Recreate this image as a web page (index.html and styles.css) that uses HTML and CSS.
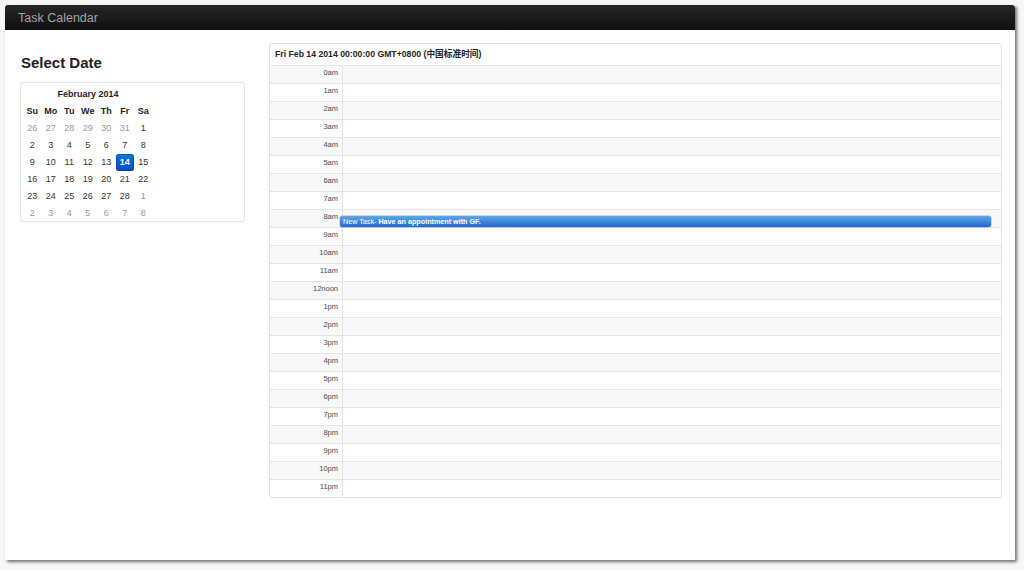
FILE: index.html
```html
<!DOCTYPE html>
<html>
<head>
<meta charset="utf-8">
<title>Task Calendar</title>
<link rel="stylesheet" href="styles.css">
</head>
<body>
<div class="window">
  <div class="navbar"><span class="brand">Task Calendar</span></div>
  <div class="content">
    <div class="sidebar">
      <h3 class="title">Select Date</h3>
      <div class="datepicker">
        <div class="dp-row dp-month">February 2014</div>
        <div class="dp-grid">
          <div class="dow">Su</div><div class="dow">Mo</div><div class="dow">Tu</div><div class="dow">We</div><div class="dow">Th</div><div class="dow">Fr</div><div class="dow">Sa</div>
          <div class="day old">26</div><div class="day old">27</div><div class="day old">28</div><div class="day old">29</div><div class="day old">30</div><div class="day old">31</div><div class="day">1</div>
          <div class="day">2</div><div class="day">3</div><div class="day">4</div><div class="day">5</div><div class="day">6</div><div class="day">7</div><div class="day">8</div>
          <div class="day">9</div><div class="day">10</div><div class="day">11</div><div class="day">12</div><div class="day">13</div><div class="day active">14</div><div class="day">15</div>
          <div class="day">16</div><div class="day">17</div><div class="day">18</div><div class="day">19</div><div class="day">20</div><div class="day">21</div><div class="day">22</div>
          <div class="day">23</div><div class="day">24</div><div class="day">25</div><div class="day">26</div><div class="day">27</div><div class="day">28</div><div class="day old">1</div>
          <div class="day old">2</div><div class="day old">3</div><div class="day old">4</div><div class="day old">5</div><div class="day old">6</div><div class="day old">7</div><div class="day old">8</div>
        </div>
      </div>
    </div>
    <div class="dayview">
      <div class="dv-header">Fri Feb 14 2014 00:00:00 GMT+0800 (中国标准时间)</div>
      <div class="hour"><div class="time">0am</div><div class="slot"></div></div>
      <div class="hour"><div class="time">1am</div><div class="slot"></div></div>
      <div class="hour"><div class="time">2am</div><div class="slot"></div></div>
      <div class="hour"><div class="time">3am</div><div class="slot"></div></div>
      <div class="hour"><div class="time">4am</div><div class="slot"></div></div>
      <div class="hour"><div class="time">5am</div><div class="slot"></div></div>
      <div class="hour"><div class="time">6am</div><div class="slot"></div></div>
      <div class="hour"><div class="time">7am</div><div class="slot"></div></div>
      <div class="hour"><div class="time">8am</div><div class="slot"><div class="event">New Task- <b>Have an appointment with GF.</b></div></div></div>
      <div class="hour"><div class="time">9am</div><div class="slot"></div></div>
      <div class="hour"><div class="time">10am</div><div class="slot"></div></div>
      <div class="hour"><div class="time">11am</div><div class="slot"></div></div>
      <div class="hour"><div class="time">12noon</div><div class="slot"></div></div>
      <div class="hour"><div class="time">1pm</div><div class="slot"></div></div>
      <div class="hour"><div class="time">2pm</div><div class="slot"></div></div>
      <div class="hour"><div class="time">3pm</div><div class="slot"></div></div>
      <div class="hour"><div class="time">4pm</div><div class="slot"></div></div>
      <div class="hour"><div class="time">5pm</div><div class="slot"></div></div>
      <div class="hour"><div class="time">6pm</div><div class="slot"></div></div>
      <div class="hour"><div class="time">7pm</div><div class="slot"></div></div>
      <div class="hour"><div class="time">8pm</div><div class="slot"></div></div>
      <div class="hour"><div class="time">9pm</div><div class="slot"></div></div>
      <div class="hour"><div class="time">10pm</div><div class="slot"></div></div>
      <div class="hour"><div class="time">11pm</div><div class="slot"></div></div>
    </div>
  </div>
</div>
</body>
</html>
```
FILE: styles.css
```css
html, body {
  margin: 0;
  padding: 0;
}
body {
  background: #f7f7f7;
  font-family: "Liberation Sans", Arial, "Noto Sans CJK SC", sans-serif;
  color: #333;
  width: 1024px;
  height: 570px;
  overflow: hidden;
}
.window {
  margin: 5px 0 0 5px;
  width: 1010px;
  height: 555px;
  background: #fff;
  box-shadow: 2px 2px 3px rgba(0,0,0,0.55);
  box-sizing: border-box;
}
.navbar {
  height: 25px;
  background: linear-gradient(#262626, #0f0f0f);
  border-radius: 3px 3px 0 0;
  display: flex;
  align-items: center;
  padding-left: 13px;
  box-sizing: border-box;
}
.brand {
  color: #a3a3a3;
  font-size: 12.5px;
}
.content {
  display: flex;
  padding: 13px 13px 0 15px;
  gap: 24px;
}
.sidebar {
  width: 225px;
  flex: none;
}
.title {
  margin: 10px 0 9px 1px;
  font-size: 15px;
  line-height: 20px;
  font-weight: bold;
  color: #222;
}
.datepicker {
  border: 1px solid #e3e3e3;
  border-radius: 3px;
  padding: 3px 2px 0;
  height: 140px;
  box-sizing: border-box;
}
.dp-row {
  height: 17px;
  line-height: 17px;
}
.dp-month {
  width: 130px;
  text-align: center;
  font-weight: bold;
  font-size: 9px;
  color: #222;
}
.dp-grid {
  display: grid;
  grid-template-columns: repeat(7, 18.5px);
  grid-auto-rows: 17px;
}
.dow, .day {
  font-size: 9px;
  line-height: 17px;
  text-align: center;
}
.dow {
  font-weight: bold;
  color: #222;
}
.day.old {
  color: #999;
}
.day.active {
  background: linear-gradient(#0a7ad6, #0547c6);
  color: #fff;
  font-weight: bold;
  border-radius: 3px;
  box-shadow: inset 0 0 0 1px rgba(0,40,140,0.35);
}
.dayview {
  width: 733px;
  border: 1px solid #e2e2e2;
  border-radius: 3px;
  box-sizing: border-box;
  overflow: hidden;
}
.dv-header {
  height: 21px;
  line-height: 21px;
  padding-left: 5px;
  font-size: 8.7px;
  font-weight: bold;
  color: #222;
}
.hour {
  display: flex;
  height: 18px;
  border-top: 1px solid #e4e4e4;
  box-sizing: border-box;
}
.hour:nth-of-type(even) {
  background: #f8f8f8;
}
.time {
  width: 73px;
  flex: none;
  border-right: 1px solid #e4e4e4;
  text-align: right;
  font-size: 7.5px;
  line-height: 13px;
  padding-right: 4px;
  box-sizing: border-box;
  color: #4a4a4a;
}
.slot {
  flex: 1;
  position: relative;
}
.event {
  position: absolute;
  left: -3px;
  top: 6px;
  width: 651px;
  height: 11px;
  line-height: 11px;
  background: linear-gradient(#5aa8e8, #2466d2);
  border-radius: 2px;
  color: #fff;
  font-size: 7.2px;
  padding-left: 3px;
  box-sizing: border-box;
  white-space: nowrap;
  box-shadow: 0 0 0 0.5px rgba(30,80,180,0.4);
}
.event b {
  font-weight: bold;
}
```
